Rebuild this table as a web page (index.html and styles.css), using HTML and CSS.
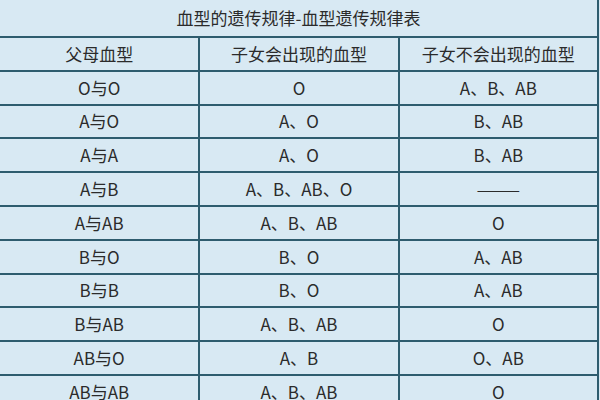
FILE: index.html
```html
<!DOCTYPE html>
<html lang="zh">
<head>
<meta charset="utf-8">
<title>血型的遗传规律</title>
<link rel="stylesheet" href="styles.css">
</head>
<body>
<table class="blood">
  <tr class="title-row"><td colspan="3" class="title">血型的遗传规律-血型遗传规律表</td></tr>
  <tr><td>父母血型</td><td>子女会出现的血型</td><td>子女不会出现的血型</td></tr>
  <tr><td>O与O</td><td>O</td><td>A、B、AB</td></tr>
  <tr><td>A与O</td><td>A、O</td><td>B、AB</td></tr>
  <tr><td>A与A</td><td>A、O</td><td>B、AB</td></tr>
  <tr><td>A与B</td><td>A、B、AB、O</td><td><span class="dash">——</span></td></tr>
  <tr><td>A与AB</td><td>A、B、AB</td><td>O</td></tr>
  <tr><td>B与O</td><td>B、O</td><td>A、AB</td></tr>
  <tr><td>B与B</td><td>B、O</td><td>A、AB</td></tr>
  <tr><td>B与AB</td><td>A、B、AB</td><td>O</td></tr>
  <tr><td>AB与O</td><td>A、B</td><td>O、AB</td></tr>
  <tr><td>AB与AB</td><td>A、B、AB</td><td>O</td></tr>
</table>
</body>
</html>
```

FILE: styles.css
```css
html, body {
  margin: 0;
  padding: 0;
  background: #d8e9f3;
}
body {
  width: 600px;
  height: 400px;
  overflow: hidden;
  font-family: "Noto Sans CJK SC", "Noto Sans", sans-serif;
  color: #2b2b2b;
}
.blood {
  border-collapse: collapse;
  width: 599px;
  table-layout: fixed;
}
.blood td {
  border: 2px solid #2e5c6e;
  height: 31.8px;
  padding: 0;
  text-align: center;
  vertical-align: middle;
  font-size: 17px;
  line-height: 20px;
}
.blood td:first-child {
  border-left: none;
  width: 198px;
}
.blood tr td:nth-child(2) {
  width: 198px;
}
.title-row td.title {
  border-top: none;
  height: 36px;
  font-size: 17px;
}
.dash {
  display: inline-block;
  transform: scaleX(1.55);
}
```
